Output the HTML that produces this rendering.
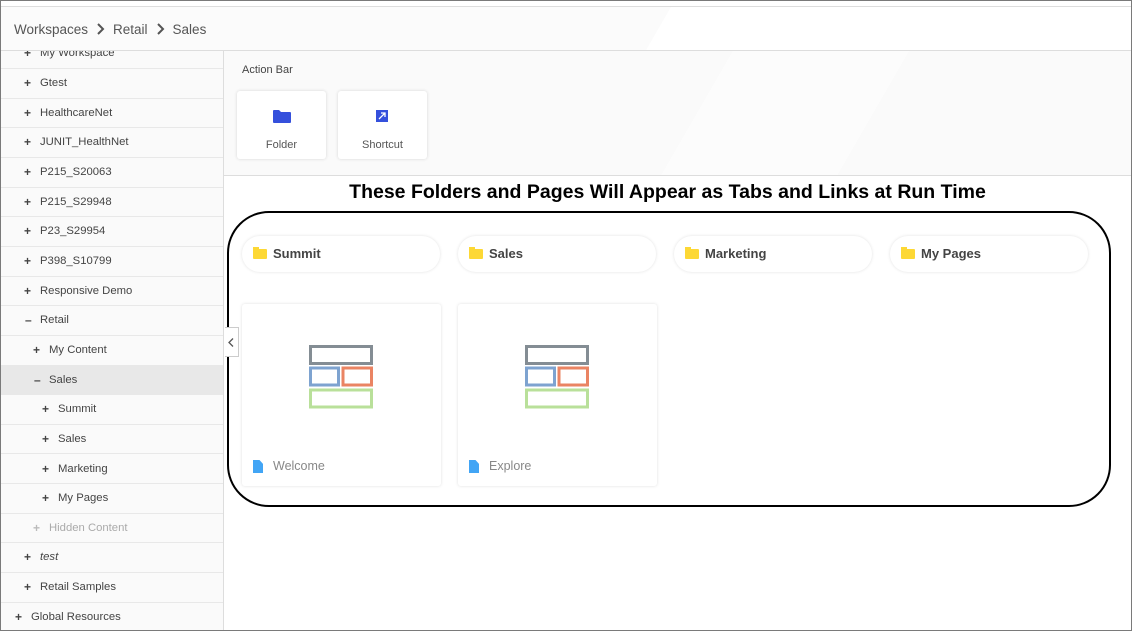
<!DOCTYPE html>
<html><head><meta charset="utf-8"><style>
*{box-sizing:border-box;margin:0;padding:0}
body{width:1132px;height:631px;position:relative;overflow:hidden;background:#fff;font-family:"Liberation Sans",Arial,sans-serif}
.frame{position:absolute;inset:0;border:1px solid #7a7a7a;z-index:10;pointer-events:none}
.hdr{position:absolute;left:0;top:6px;width:1132px;height:45px;border-top:1px solid #ddd;border-bottom:1px solid #ddd;background:linear-gradient(120deg,#fbfbfb 0,#fbfbfb 58%,#fff 58%,#fff 100%)}
.bc{position:absolute;left:14px;top:15px;font-size:13.5px;color:#555;white-space:nowrap}
.bc svg{display:inline-block;margin:0 8px;vertical-align:-1px}
.side{position:absolute;left:0;top:51px;width:224px;height:580px;background:#fafafa;border-right:1px solid #ddd;overflow:hidden}
.row{position:absolute;left:0;width:223px;height:29.65px;border-bottom:1px solid #e8e8e8;font-size:11.3px;color:#444;line-height:29px}
.row b{position:absolute;font-weight:bold;font-size:12px;color:#444}
.sel{background:#e8e8e8}
.act{position:absolute;left:224px;top:51px;width:907px;height:125px;border-bottom:1px solid #ddd;background:linear-gradient(120deg,#fafafa 0,#fafafa 52%,#fcfcfc 52%,#fcfcfc 70%,#fafafa 70%)}
.abt{position:absolute;left:18px;top:13px;font-size:11px;color:#444}
.btn{position:absolute;top:40px;width:89px;height:68px;background:#fff;border-radius:3px;box-shadow:0 0 3px rgba(0,0,0,.15);text-align:center;font-size:11px;color:#555}
.btn .l{position:absolute;left:0;right:0;top:48px}
h1{position:absolute;left:214px;width:907px;top:181px;text-align:center;font-size:19.5px;font-weight:bold;color:#000}
.big{position:absolute;left:227px;top:211px;width:884px;height:296px;border:2.5px solid #000;border-radius:42px}
.pill{position:absolute;top:236px;width:198px;height:36px;border-radius:18px;background:#fff;box-shadow:0 0 3px rgba(0,0,0,.12);font-size:13px;font-weight:bold;color:#444;line-height:36px;padding-left:31px}
.pill i{position:absolute;left:11px;top:13px;width:14px;height:10px;background:#fdd835;border-radius:1px}
.pill i:before{content:"";position:absolute;left:0;top:-2px;width:6px;height:3px;background:#fdd835}
.card{position:absolute;top:304px;width:199px;height:182px;background:#fff;border-radius:3px;box-shadow:0 0 3px rgba(0,0,0,.13)}
.card .t{position:absolute;left:31px;top:155px;font-size:12.5px;color:#888}
.card .d{position:absolute;left:11px;top:156px;width:10px;height:13px;background:#42a5f5;clip-path:polygon(0 0,65% 0,100% 30%,100% 100%,0 100%)}
.tog{position:absolute;left:225px;top:327px;width:14px;height:30px;border:1px solid #ccc;border-left:none;background:#fff}
</style></head><body>
<div class="frame"></div>
<div class="hdr"><div class="bc">Workspaces<svg width="9" height="12" viewBox="0 0 9 12"><path d="M2 1L7 6L2 11" stroke="#555" stroke-width="2" fill="none"/></svg>Retail<svg width="9" height="12" viewBox="0 0 9 12"><path d="M2 1L7 6L2 11" stroke="#555" stroke-width="2" fill="none"/></svg>Sales</div></div>
<div class="side">
<div class="row" style="top:-11.6px"><b style="left:24px">+</b><span style="position:absolute;left:40px">My Workspace</span></div>
<div class="row" style="top:18px"><b style="left:24px">+</b><span style="position:absolute;left:40px">Gtest</span></div>
<div class="row" style="top:47.7px"><b style="left:24px">+</b><span style="position:absolute;left:40px">HealthcareNet</span></div>
<div class="row" style="top:77.3px"><b style="left:24px">+</b><span style="position:absolute;left:40px">JUNIT_HealthNet</span></div>
<div class="row" style="top:107px"><b style="left:24px">+</b><span style="position:absolute;left:40px">P215_S20063</span></div>
<div class="row" style="top:136.6px"><b style="left:24px">+</b><span style="position:absolute;left:40px">P215_S29948</span></div>
<div class="row" style="top:166.3px"><b style="left:24px">+</b><span style="position:absolute;left:40px">P23_S29954</span></div>
<div class="row" style="top:195.9px"><b style="left:24px">+</b><span style="position:absolute;left:40px">P398_S10799</span></div>
<div class="row" style="top:225.6px"><b style="left:24px">+</b><span style="position:absolute;left:40px">Responsive Demo</span></div>
<div class="row" style="top:255.2px"><b style="left:25px">–</b><span style="position:absolute;left:40px">Retail</span></div>
<div class="row" style="top:284.9px"><b style="left:33px">+</b><span style="position:absolute;left:49px">My Content</span></div>
<div class="row sel" style="top:314.5px"><b style="left:34px">–</b><span style="position:absolute;left:49px">Sales</span></div>
<div class="row" style="top:344.2px"><b style="left:42px">+</b><span style="position:absolute;left:58px">Summit</span></div>
<div class="row" style="top:373.8px"><b style="left:42px">+</b><span style="position:absolute;left:58px">Sales</span></div>
<div class="row" style="top:403.5px"><b style="left:42px">+</b><span style="position:absolute;left:58px">Marketing</span></div>
<div class="row" style="top:433.1px"><b style="left:42px">+</b><span style="position:absolute;left:58px">My Pages</span></div>
<div class="row" style="top:462.8px;color:#aaa"><b style="left:33px;color:#bbb">+</b><span style="position:absolute;left:49px">Hidden Content</span></div>
<div class="row" style="top:492.4px"><b style="left:24px">+</b><span style="position:absolute;left:40px;font-style:italic">test</span></div>
<div class="row" style="top:522.1px"><b style="left:24px">+</b><span style="position:absolute;left:40px">Retail Samples</span></div>
<div class="row" style="top:551.7px"><b style="left:15px">+</b><span style="position:absolute;left:31px">Global Resources</span></div>
</div>
<div class="act"><div class="abt">Action Bar</div>
<div class="btn" style="left:13px"><svg style="position:absolute;left:36px;top:19px" width="18" height="13" viewBox="0 0 18 13"><path d="M0 1Q0 0 1 0H6L8 2H17Q18 2 18 3V12Q18 13 17 13H1Q0 13 0 12Z" fill="#3550dc"/></svg><div class="l">Folder</div></div>
<div class="btn" style="left:114px"><svg style="position:absolute;left:38px;top:19px" width="12" height="12" viewBox="0 0 12 12"><rect width="12" height="12" fill="#3550dc"/><path d="M3 9L9 3M5 3H9V7" stroke="#fff" stroke-width="1.3" fill="none"/></svg><div class="l">Shortcut</div></div>
</div>
<h1>These Folders and Pages Will Appear as Tabs and Links at Run Time</h1>
<div class="big"></div>
<div class="pill" style="left:242px"><i></i>Summit</div>
<div class="pill" style="left:458px"><i></i>Sales</div>
<div class="pill" style="left:674px"><i></i>Marketing</div>
<div class="pill" style="left:890px"><i></i>My Pages</div>
<div class="tog"><svg style="position:absolute;left:3px;top:10px" width="6" height="9" viewBox="0 0 6 9"><path d="M5 0.5L1 4.5L5 8.5" stroke="#555" stroke-width="1.3" fill="none"/></svg></div>
<div class="card" style="left:242px"><svg style="position:absolute;left:67px;top:41px" width="64" height="64" viewBox="0 0 64 64"><rect x="1.5" y="1.5" width="61" height="17" fill="none" stroke="#848d94" stroke-width="3"/><rect x="1.5" y="23" width="28" height="17" fill="none" stroke="#7ea3d0" stroke-width="3"/><rect x="34" y="23" width="28.5" height="17" fill="none" stroke="#ea8463" stroke-width="3"/><rect x="1.5" y="45" width="61" height="17" fill="none" stroke="#b9e09a" stroke-width="3"/></svg><div class="d"></div><div class="t">Welcome</div></div>
<div class="card" style="left:458px"><svg style="position:absolute;left:67px;top:41px" width="64" height="64" viewBox="0 0 64 64"><rect x="1.5" y="1.5" width="61" height="17" fill="none" stroke="#848d94" stroke-width="3"/><rect x="1.5" y="23" width="28" height="17" fill="none" stroke="#7ea3d0" stroke-width="3"/><rect x="34" y="23" width="28.5" height="17" fill="none" stroke="#ea8463" stroke-width="3"/><rect x="1.5" y="45" width="61" height="17" fill="none" stroke="#b9e09a" stroke-width="3"/></svg><div class="d"></div><div class="t">Explore</div></div>
</body></html>
